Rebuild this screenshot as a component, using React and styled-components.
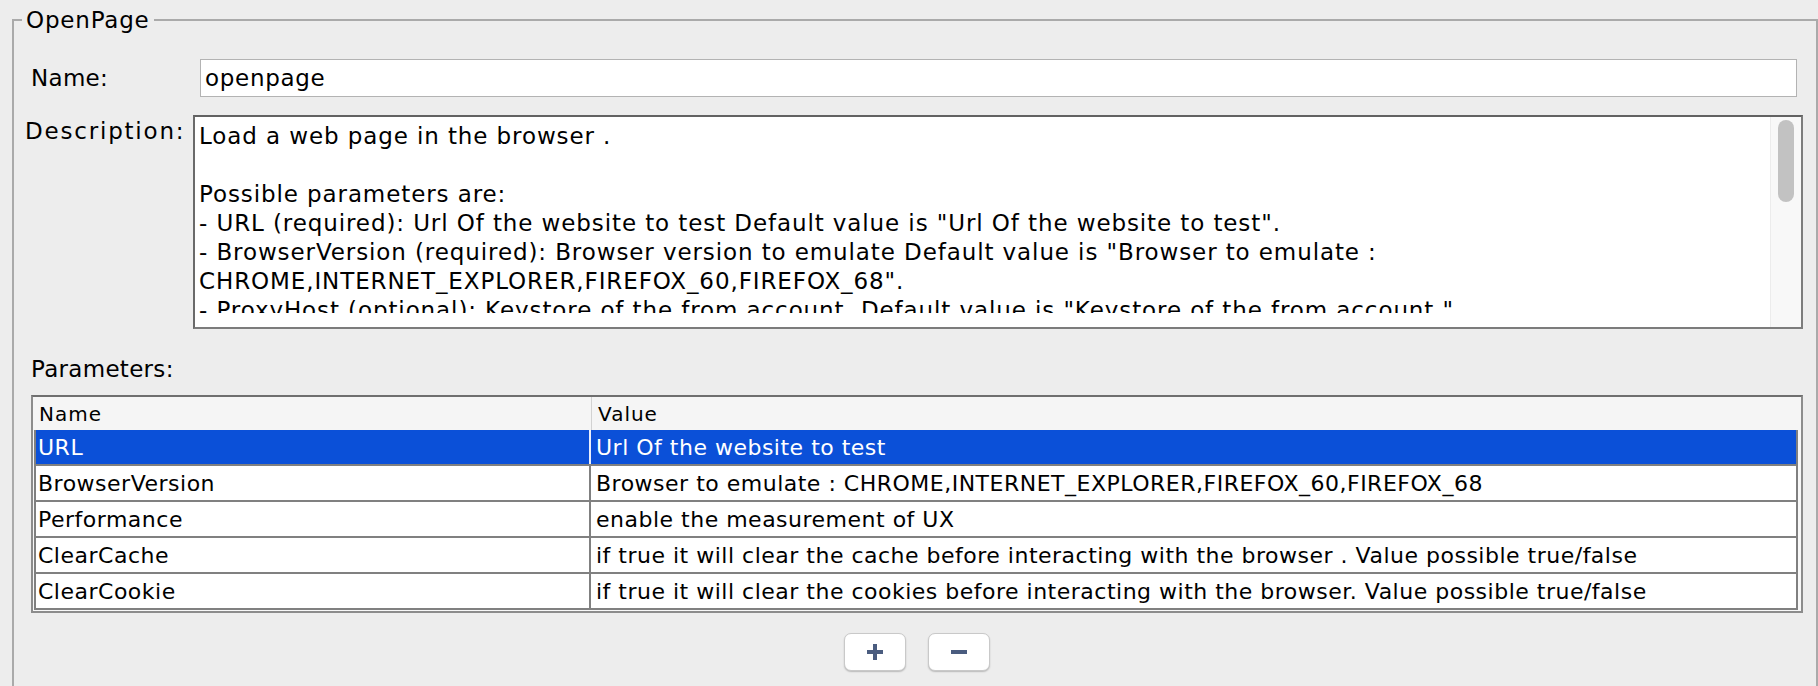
import React from 'react';
import styled, { createGlobalStyle } from 'styled-components';

const GlobalStyle = createGlobalStyle`
  html, body {
    margin: 0;
    padding: 0;
    background: #ededed;
    overflow: hidden;
  }
  body {
    font-family: "DejaVu Sans", "Liberation Sans", sans-serif;
    font-size: 23px;
    letter-spacing: 0.3px;
    color: #000;
  }
`;

const Panel = styled.fieldset`
  margin: 8px 0 0 12px;
  padding: 0;
  min-height: 720px;
  border: 2px solid #aaaaaa;
  box-sizing: border-box;
`;

const Legend = styled.legend`
  margin-left: 8px;
  padding: 0 4px;
  font-size: 23px;
  letter-spacing: 0.8px;
  line-height: 24px;
`;

const Body = styled.div`
  padding: 27px 13px 0 0;
`;

const Row = styled.div`
  display: flex;
  align-items: ${p => (p.$top ? 'flex-start' : 'center')};
  margin-right: ${p => p.$inset || 0}px;
  margin-top: ${p => p.$gap || 0}px;
`;

const Label = styled.div`
  box-sizing: border-box;
  width: ${p => p.$width}px;
  padding-left: ${p => p.$left}px;
  margin-top: ${p => p.$drop || 0}px;
  letter-spacing: ${p => p.$spacing || 0.3}px;
  line-height: 24px;
  white-space: nowrap;
`;

const TextField = styled.div`
  flex: 1;
  height: 38px;
  box-sizing: border-box;
  border: 1px solid #b3b3b3;
  background: #fff;
  padding-left: 4px;
  line-height: 36px;
  letter-spacing: 0.7px;
`;

const TextArea = styled.div`
  flex: 1;
  display: flex;
  align-items: flex-start;
  height: 214px;
  box-sizing: border-box;
  border: 2px solid #7c7c7c;
  border-top-color: #626262;
  border-left-color: #6a6a6a;
  background: #fff;
`;

const TextLines = styled.div`
  flex: 1;
  height: 191px;
  padding: 5px 4px 0;
  overflow: hidden;
  line-height: 29px;
  letter-spacing: 0.9px;
  white-space: pre;
`;

const ScrollTrack = styled.div`
  align-self: stretch;
  width: 30px;
  background: #f8f8f8;
  border-left: 1px solid #ececec;
  display: flex;
  justify-content: center;
  padding-top: 3px;
`;

const ScrollThumb = styled.div`
  width: 16px;
  height: 82px;
  border-radius: 8px;
  background: #c2c2c2;
`;

const SectionLabel = styled.div`
  margin: 28px 0 0 17px;
  line-height: 24px;
`;

const TableFrame = styled.div`
  margin: 14px 0 0 17px;
  border: 2px solid #8c8c8c;
  border-top-color: #6f6f6f;
  background: #f8f8f8;
  padding-bottom: 1px;
`;

const HeaderRow = styled.div`
  display: flex;
  height: 33px;
  align-items: center;
  background: #f5f5f5;
  font-size: 20px;
  letter-spacing: 1px;
`;

const HeaderCell = styled.div`
  box-sizing: border-box;
  height: 100%;
  display: flex;
  align-items: center;
  padding-left: 6px;
  ${p => (p.$width ? `width: ${p.$width}px;` : 'flex: 1;')}
  ${p => p.$divider && 'border-left: 1px solid #d2d2d2;'}
`;

const Grid = styled.div`
  margin: 0 3px 0 1px;
  border-left: 2px solid #808080;
  border-right: 2px solid #808080;
  background: #fff;
  font-size: 22px;
  letter-spacing: 0.5px;
`;

const DataRow = styled.div`
  display: flex;
  height: 36px;
  box-sizing: border-box;
  border-bottom: 2px solid #808080;
  background: ${p => (p.$selected ? '#0b50d8' : '#fff')};
  color: ${p => (p.$selected ? '#fff' : '#000')};
`;

const Cell = styled.div`
  box-sizing: border-box;
  display: flex;
  align-items: center;
  white-space: nowrap;
  overflow: hidden;
  ${p => (p.$width ? `width: ${p.$width}px;` : 'flex: 1;')}
  padding-left: ${p => p.$pad}px;
  ${p => p.$width && `border-right: 2px solid ${p.$selected ? '#e9eefb' : '#808080'};`}
`;

const ButtonBar = styled.div`
  display: flex;
  justify-content: center;
  gap: 22px;
  margin: 20px 0 0 17px;
`;

const IconButton = styled.button`
  width: 62px;
  height: 38px;
  padding: 0;
  display: flex;
  align-items: center;
  justify-content: center;
  background: #fff;
  border: 1px solid #c9c9c9;
  border-radius: 7px;
  box-shadow: 0 1px 1.5px rgba(0, 0, 0, 0.22);
`;

const description = [
  'Load a web page in the browser .',
  '',
  'Possible parameters are:',
  '- URL (required): Url Of the website to test Default value is "Url Of the website to test".',
  '- BrowserVersion (required): Browser version to emulate Default value is "Browser to emulate :',
  'CHROME,INTERNET_EXPLORER,FIREFOX_60,FIREFOX_68".',
  '- ProxyHost (optional): Keystore of the from account. Default value is "Keystore of the from account."',
];

const params = [
  ['URL', 'Url Of the website to test'],
  ['BrowserVersion', 'Browser to emulate : CHROME,INTERNET_EXPLORER,FIREFOX_60,FIREFOX_68'],
  ['Performance', 'enable the measurement of UX'],
  ['ClearCache', 'if true it will clear the cache before interacting with the browser . Value possible true/false'],
  ['ClearCookie', 'if true it will clear the cookies before interacting with the browser. Value possible true/false'],
];

function PlusIcon() {
  return (
    <svg width="16" height="16" viewBox="0 0 16 16">
      <rect x="6" y="0" width="4" height="16" fill="#4a5c7f" />
      <rect x="0" y="6" width="16" height="4" fill="#4a5c7f" />
    </svg>
  );
}

function MinusIcon() {
  return (
    <svg width="16" height="4" viewBox="0 0 16 4">
      <rect x="0" y="0" width="16" height="4" fill="#4a5c7f" />
    </svg>
  );
}

export default function App() {
  return (
    <>
      <GlobalStyle />
      <Panel>
        <Legend>OpenPage</Legend>
        <Body>
          <Row $inset={6}>
            <Label $width={186} $left={17}>Name:</Label>
            <TextField>openpage</TextField>
          </Row>

          <Row $top $gap={18}>
            <Label $width={179} $left={11} $drop={4} $spacing={1.8}>Description:</Label>
            <TextArea>
              <TextLines>
                {description.map((line, i) => (
                  <div key={i}>{line || ' '}</div>
                ))}
              </TextLines>
              <ScrollTrack>
                <ScrollThumb />
              </ScrollTrack>
            </TextArea>
          </Row>

          <SectionLabel>Parameters:</SectionLabel>

          <TableFrame>
            <HeaderRow>
              <HeaderCell $width={558}>Name</HeaderCell>
              <HeaderCell $divider>Value</HeaderCell>
            </HeaderRow>
            <Grid>
              {params.map(([name, value], i) => (
                <DataRow key={name} $selected={i === 0}>
                  <Cell $width={555} $pad={2} $selected={i === 0}>{name}</Cell>
                  <Cell $pad={5}>{value}</Cell>
                </DataRow>
              ))}
            </Grid>
          </TableFrame>

          <ButtonBar>
            <IconButton aria-label="Add parameter"><PlusIcon /></IconButton>
            <IconButton aria-label="Remove parameter"><MinusIcon /></IconButton>
          </ButtonBar>
        </Body>
      </Panel>
    </>
  );
}
